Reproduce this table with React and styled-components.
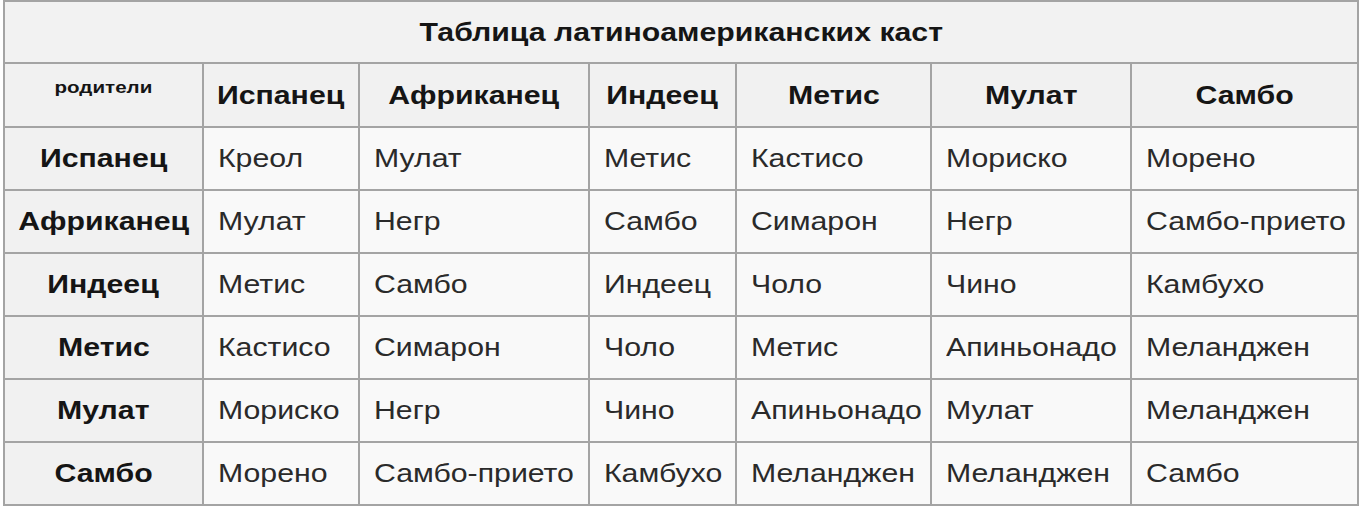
import React from "react";
import styled, { createGlobalStyle } from "styled-components";

const GlobalStyle = createGlobalStyle`
  html, body {
    margin: 0;
    padding: 0;
    background: #ffffff;
  }
  body {
    font-family: "Liberation Sans", Arial, sans-serif;
  }
`;

const Page = styled.div`
  padding: 0 3px;
`;

const Table = styled.table`
  border-collapse: collapse;
  table-layout: fixed;
  width: 1354px;
  background: #f9f9f9;
  color: #222;
`;

const Caption = styled.th`
  height: 60px;
  background: #f2f2f2;
  border: 2px solid #a4a4a4;
  text-align: center;
  vertical-align: middle;
  padding: 0;
  font-weight: bold;
  font-size: 25px;
  color: #151515;
`;

const HeadCell = styled.th`
  height: ${(p) => (p.$top ? "48px" : "62px")};
  background: #f1f1f1;
  border: 2px solid #a4a4a4;
  text-align: center;
  vertical-align: ${(p) => (p.$top ? "top" : "middle")};
  padding: ${(p) => (p.$top ? "14px 0 0 0" : "0")};
  font-weight: bold;
  font-size: ${(p) => (p.$small ? "17px" : "25px")};
  color: #151515;
`;

const RowHead = styled.th`
  height: 61px;
  background: #f1f1f1;
  border: 2px solid #a4a4a4;
  text-align: center;
  vertical-align: middle;
  padding: 0;
  font-weight: bold;
  font-size: 25px;
  color: #151515;
`;

const Cell = styled.td`
  height: 61px;
  background: #f9f9f9;
  border: 2px solid #a4a4a4;
  text-align: left;
  vertical-align: middle;
  padding: 0 0 0 14px;
  font-size: 25px;
  color: #2a2a2a;
  white-space: nowrap;
`;

// the source picture is stretched sideways, so glyphs are widened to match
const Wide = styled.span`
  display: inline-block;
  white-space: nowrap;
  transform: scaleX(1.21);
  transform-origin: ${(p) => (p.$left ? "left center" : "center center")};
`;

const widths = [199, 156, 230, 147, 195, 200, 227];

const castes = ["Испанец", "Африканец", "Индеец", "Метис", "Мулат", "Самбо"];

const grid = [
  ["Креол", "Мулат", "Метис", "Кастисо", "Мориско", "Морено"],
  ["Мулат", "Негр", "Самбо", "Симарон", "Негр", "Самбо-прието"],
  ["Метис", "Самбо", "Индеец", "Чоло", "Чино", "Камбухо"],
  ["Кастисо", "Симарон", "Чоло", "Метис", "Апиньонадо", "Меланджен"],
  ["Мориско", "Негр", "Чино", "Апиньонадо", "Мулат", "Меланджен"],
  ["Морено", "Самбо-прието", "Камбухо", "Меланджен", "Меланджен", "Самбо"],
];

export default function App() {
  return (
    <Page>
      <GlobalStyle />
      <Table>
        <colgroup>
          {widths.map((w, i) => (
            <col key={i} style={{ width: w }} />
          ))}
        </colgroup>
        <thead>
          <tr>
            <Caption colSpan={7}>
              <Wide>Таблица латиноамериканских каст</Wide>
            </Caption>
          </tr>
          <tr>
            <HeadCell $top $small>
              <Wide>родители</Wide>
            </HeadCell>
            {castes.map((c) => (
              <HeadCell key={c}>
                <Wide>{c}</Wide>
              </HeadCell>
            ))}
          </tr>
        </thead>
        <tbody>
          {grid.map((row, r) => (
            <tr key={r}>
              <RowHead>
                <Wide>{castes[r]}</Wide>
              </RowHead>
              {row.map((v, c) => (
                <Cell key={c}>
                  <Wide $left>{v}</Wide>
                </Cell>
              ))}
            </tr>
          ))}
        </tbody>
      </Table>
    </Page>
  );
}
